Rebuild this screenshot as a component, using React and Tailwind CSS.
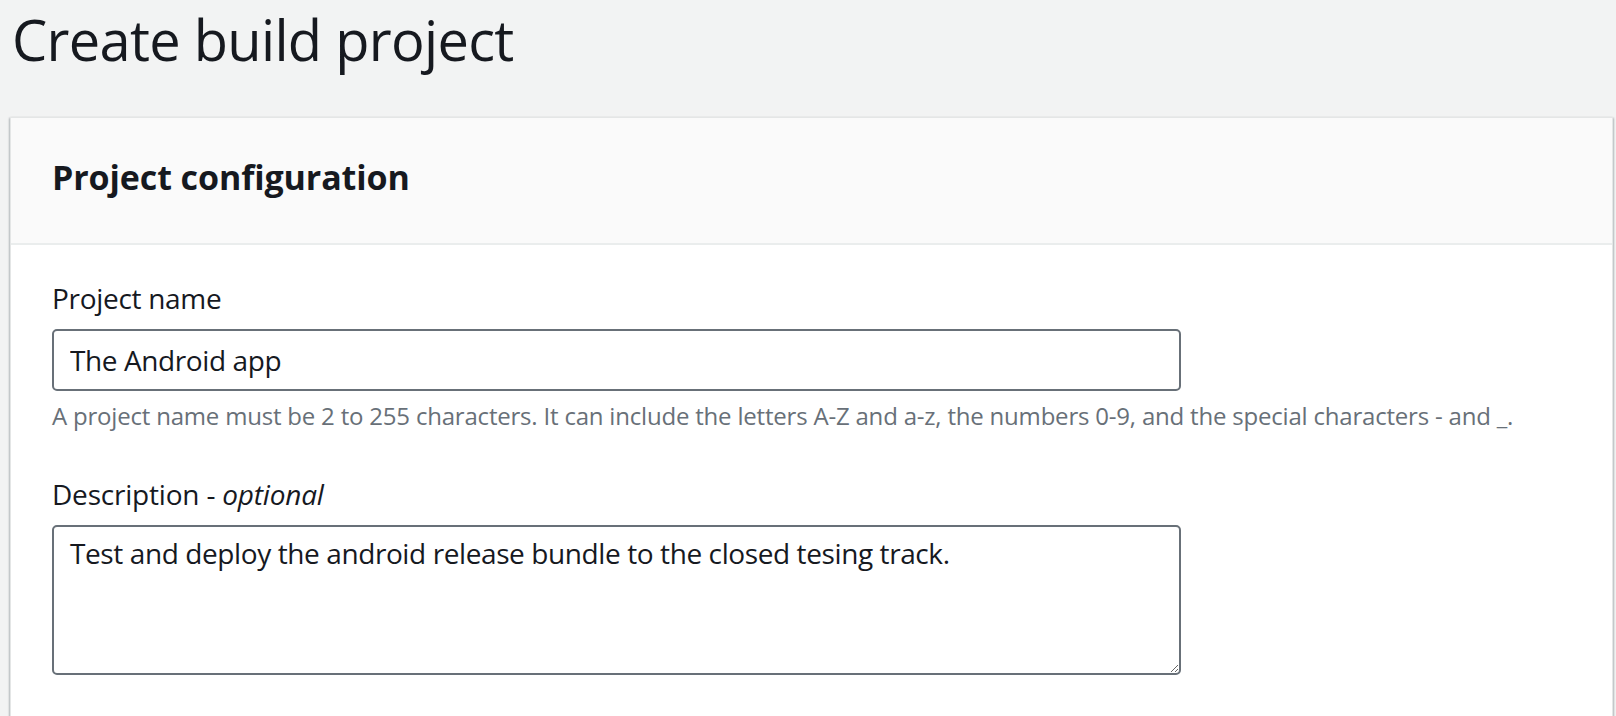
export default function App() {
  return (
    <div className="min-h-screen bg-[#f2f3f3] text-[#16191f]" style={{ fontFamily: '"Open Sans", "Noto Sans", sans-serif' }}>
      <h1 className="pl-[12px] pt-[6px] text-[56px] leading-[67px] font-normal tracking-[-0.7px]">
        Create build project
      </h1>

      <div className="ml-[10px] mr-[3px] mt-[44px] bg-white border border-[#e4e6e6] shadow-[0_1px_2px_0_rgba(0,28,36,0.3),1px_1px_2px_0_rgba(0,28,36,0.15),-1px_1px_2px_0_rgba(0,28,36,0.15)]">
        <div className="bg-[#fafafa] border-b-2 border-[#eaeded] px-[41px] pt-[38px] pb-[44px]">
          <h2 className="text-[34px] leading-[43px] font-bold tracking-[-0.1px]">Project configuration</h2>
        </div>

        <div className="px-[41px] pt-[34px] pb-[60px]">
          <label className="block text-[28px] leading-[39px] tracking-[-0.3px]">Project name</label>
          <input
            readOnly
            value="The Android app"
            className="mt-[11px] block w-[1129px] h-[62px] border-2 border-[#687078] rounded-[5px] px-[16px] text-[28px] tracking-[-0.4px] text-[#16191f] bg-white outline-none"
          />
          <p className="mt-[8px] text-[24px] leading-[34px] tracking-[-0.2px] text-[#687078]">
            A project name must be 2 to 255 characters. It can include the letters A-Z and a-z, the numbers 0-9, and the special characters - and _.
          </p>

          <label className="block mt-[42px] text-[28px] leading-[39px] tracking-[-0.2px]">
            Description - <i>optional</i>
          </label>
          <textarea
            readOnly
            defaultValue="Test and deploy the android release bundle to the closed tesing track."
            className="mt-[11px] block w-[1129px] h-[150px] border-2 border-[#687078] rounded-[5px] px-[16px] pt-[7px] text-[28px] leading-[39px] tracking-[-0.4px] text-[#16191f] bg-white outline-none resize"
          />
        </div>
      </div>
    </div>
  );
}
